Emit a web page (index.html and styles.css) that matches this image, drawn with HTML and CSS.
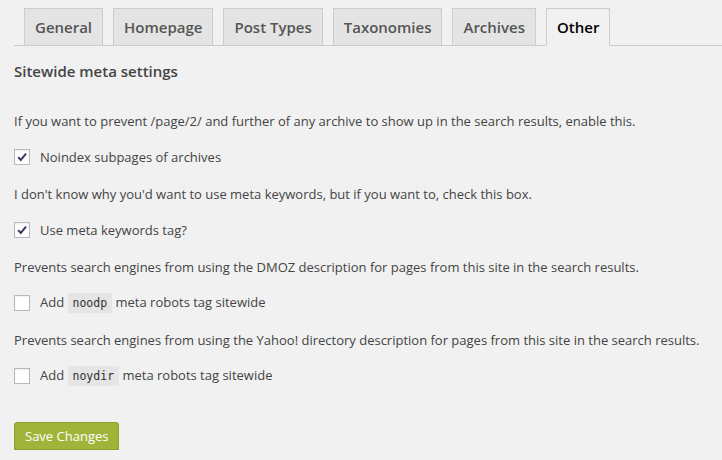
FILE: index.html
```html
<!DOCTYPE html>
<html lang="en">

    <head>
        <meta charset="UTF-8">
        <meta name="viewport" content="width=device-width, initial-scale=1.0">
        <title>Other - Titles &amp; Metas</title>
        <link rel="stylesheet" href="styles.css">
    </head>

    <body>

        <nav class="tabs">
            <a class="tab" href="#general">General</a>
            <a class="tab" href="#home">Homepage</a>
            <a class="tab" href="#post_types">Post Types</a>
            <a class="tab" href="#taxonomies">Taxonomies</a>
            <a class="tab" href="#archives">Archives</a>
            <a class="tab active" href="#other">Other</a>
        </nav>

        <section id="other">
            <h2>Sitewide meta settings</h2>

            <p>If you want to prevent /page/2/ and further of any archive to show up in the search results, enable this.</p>
            <label class="option">
                <input type="checkbox" name="noindex-subpages" checked>
                <span class="box"><svg viewBox="0 0 16 16"><path d="M3.6 8.2 L6.6 11.4 L12.6 4.2" /></svg></span>
                <span>Noindex subpages of archives</span>
            </label>

            <p>I don't know why you'd want to use meta keywords, but if you want to, check this box.</p>
            <label class="option">
                <input type="checkbox" name="usemetakeywords" checked>
                <span class="box"><svg viewBox="0 0 16 16"><path d="M3.6 8.2 L6.6 11.4 L12.6 4.2" /></svg></span>
                <span>Use meta keywords tag?</span>
            </label>

            <p>Prevents search engines from using the DMOZ description for pages from this site in the search results.</p>
            <label class="option">
                <input type="checkbox" name="noodp">
                <span class="box"></span>
                <span>Add <code>noodp</code> meta robots tag sitewide</span>
            </label>

            <p>Prevents search engines from using the Yahoo! directory description for pages from this site in the search results.</p>
            <label class="option">
                <input type="checkbox" name="noydir">
                <span class="box"></span>
                <span>Add <code>noydir</code> meta robots tag sitewide</span>
            </label>

            <button type="submit">Save Changes</button>
        </section>

    </body>

</html>
```

FILE: styles.css
```css
body {
    font-family: "Open Sans", sans-serif;
    font-size: 13px;
    color: #444;
    background-color: #f1f1f1;
    margin: 0;
    padding: 8px 0 0 14px;
}

.tabs {
    display: flex;
    gap: 10px;
    padding-left: 10px;
    border-bottom: 1px solid #ccc;
}

.tab {
    display: block;
    padding: 6px 10px;
    margin-bottom: -1px;
    font-size: 15px;
    font-weight: 600;
    line-height: 24px;
    color: #555;
    text-decoration: none;
    background-color: #e4e4e4;
    border: 1px solid #ccc;
}

.tab.active {
    color: #000;
    background-color: #f1f1f1;
    border-bottom-color: #f1f1f1;
}

h2 {
    font-size: 15px;
    font-weight: 600;
    line-height: 20px;
    color: #444;
    margin: 15px 0 0;
}

p {
    line-height: 18px;
    margin: 31px 0 0;
}

.option + p {
    margin-top: 18px;
}

.option {
    display: flex;
    align-items: center;
    gap: 10px;
    height: 20px;
    margin-top: 17px;
}

.option input {
    display: none;
}

.box {
    width: 14px;
    height: 14px;
    border: 1px solid #b4b9be;
    background-color: #fff;
    box-shadow: inset 0 1px 2px rgba(0, 0, 0, 0.07);
}

.box svg {
    display: block;
    width: 14px;
    height: 14px;
}

.box path {
    fill: none;
    stroke: #3b3463;
    stroke-width: 2.2;
}

code {
    display: inline-block;
    font-family: "DejaVu Sans Mono", monospace;
    font-size: 11.5px;
    line-height: 20px;
    padding: 0 5px;
    background-color: #e5e5e5;
    color: #333;
}

button {
    display: block;
    margin-top: 36px;
    height: 28px;
    padding: 0 10px;
    font-family: "Open Sans", sans-serif;
    font-size: 13px;
    color: #fff;
    background-color: #a1b43a;
    border: 1px solid #8ea22f;
    border-radius: 3px;
    box-shadow: 0 1px 0 #7f9128;
    cursor: pointer;
}
```
